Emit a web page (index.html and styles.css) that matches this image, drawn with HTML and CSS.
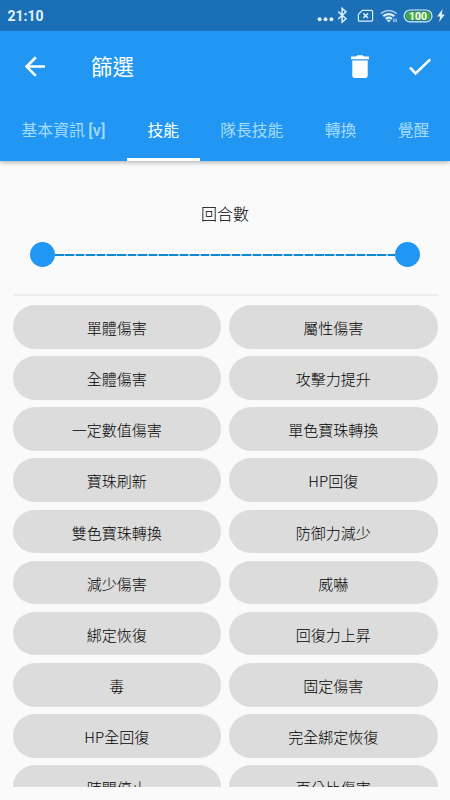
FILE: index.html
```html
<!DOCTYPE html>
<html lang="zh-Hant">
<head>
    <meta charset="UTF-8">
    <meta name="viewport" content="width=device-width, initial-scale=1">
    <title>篩選</title>
    <link rel="stylesheet" href="styles.css">
</head>
<body>
<div class="app">
    <header class="header">
        <div class="status">
            <span class="time">21:10</span>
            <svg class="status-icons" width="126" height="20" viewBox="0 0 126 20">
                <g fill="#d9efff">
                    <circle cx="10.6" cy="13.2" r="2"/>
                    <circle cx="16.5" cy="13.2" r="2"/>
                    <circle cx="22.4" cy="13.2" r="2"/>
                </g>
                <path d="M29.2 5.6l7.8 7.2-3.9 3.4V2.4L37 5.8 29.2 13" fill="none" stroke="#d9efff" stroke-width="1.5"/>
                <path d="M53.4 4.4h9.2q1 0 1 1v8.8q0 1-1 1H50.4q-1 0-1-1V8.2z" fill="none" stroke="#d9efff" stroke-width="1.2"/>
                <path d="M54.4 7.4l4.6 4.6m0-4.6L54.4 12" stroke="#d9efff" stroke-width="1.5"/>
                <g fill="none" stroke="#d9efff">
                    <path d="M71.8 7.6q8-6 16 0" stroke-width="1.5" opacity=".75"/>
                    <path d="M74.2 10.2q5.6-4.2 11.2 0" stroke-width="2.1"/>
                    <path d="M76.6 12.8q3.2-2.4 6.4 0" stroke-width="2.1"/>
                </g>
                <path d="M77.6 13.8h4.4l-2.2 2.6z" fill="#d9efff"/>
                <path d="M84.9 12.6v3.6m2.2-3.6v3.6" stroke="#d9efff" stroke-width="1"/>
                <rect x="95.2" y="4" width="27.8" height="11.8" rx="5.9" fill="#1c6fb5" stroke="#d9efff" stroke-width="1.2"/>
                <rect x="96.8" y="5.6" width="24.6" height="8.6" rx="4.3" fill="#43ad3b"/>
                <text class="battery-text" x="109" y="13.8" text-anchor="middle">100</text>
            </svg>
            <svg class="bolt" width="8" height="14" viewBox="0 0 8 14">
                <path d="M5.6 0L.2 7.6h2.9L2.2 13 7.8 5.4H4.7z" fill="#e2f3ff"/>
            </svg>
        </div>
        <div class="toolbar">
            <svg class="back" width="26" height="26" viewBox="0 0 24 24">
                <path d="M21.2 11.6H4.6M12.8 3L4.2 11.6l8.6 8.6" fill="none" stroke="#fff" stroke-width="2.4"/>
            </svg>
            <h1 class="title">篩選</h1>
            <svg class="trash" width="20" height="26" viewBox="0 0 20 26">
                <path d="M1 2.5h5l1.3-1.3h5.4L14 2.5h5v2.7H1zM2.3 6.5h15.4v15.3q0 2.2-2.2 2.2h-11q-2.2 0-2.2-2.2z" fill="#fff"/>
            </svg>
            <svg class="check" width="24" height="20" viewBox="0 0 24 20">
                <path d="M2 10.6l5.6 5.8L22.2 2.4" fill="none" stroke="#fff" stroke-width="2.5"/>
            </svg>
        </div>
        <nav class="tabs">
            <div class="tab tab-info">基本資訊 <span class="version">[v]</span></div>
            <div class="tab tab-skill active">技能</div>
            <div class="tab tab-leader">隊長技能</div>
            <div class="tab tab-change">轉換</div>
            <div class="tab tab-awake">覺醒</div>
        </nav>
    </header>

    <main class="content">
        <div class="turns">
            <div class="turns-label">回合數</div>
            <div class="slider">
                <div class="thumb"></div>
                <div class="track"></div>
                <div class="thumb"></div>
            </div>
        </div>
        <div class="chips">
            <div class="chip">單體傷害</div>
            <div class="chip">屬性傷害</div>
            <div class="chip">全體傷害</div>
            <div class="chip">攻擊力提升</div>
            <div class="chip">一定數值傷害</div>
            <div class="chip">單色寶珠轉換</div>
            <div class="chip">寶珠刷新</div>
            <div class="chip">HP回復</div>
            <div class="chip">雙色寶珠轉換</div>
            <div class="chip">防御力減少</div>
            <div class="chip">減少傷害</div>
            <div class="chip">威嚇</div>
            <div class="chip">綁定恢復</div>
            <div class="chip">回復力上昇</div>
            <div class="chip">毒</div>
            <div class="chip">固定傷害</div>
            <div class="chip">HP全回復</div>
            <div class="chip">完全綁定恢復</div>
            <div class="chip">時間停止</div>
            <div class="chip">百分比傷害</div>
        </div>
    </main>
</div>
</body>
</html>
```
FILE: styles.css
```css
*{
    margin: 0;
    padding: 0;
    box-sizing: border-box;
}
body{
    background: #fafafa;
    font-family: "Noto Sans CJK TC", sans-serif;
    color: #000;
}
.app{
    width: 450px;
    height: 800px;
    padding-bottom: 13px;
    display: flex;
    flex-direction: column;
    overflow: hidden;
}
svg{
    display: block;
    flex: none;
}

/* header */
.header{
    flex: none;
    height: 161px;
    background: #2196f3;
    box-shadow: 0 1px 5px rgba(0,0,0,.35);
    z-index: 1;
}
.status{
    height: 31px;
    padding: 0 5px 0 7.5px;
    background: #1b6fb6;
    display: flex;
    align-items: center;
}
.time{
    flex: 1;
    padding-top: 1px;
    font: bold 14px Roboto, sans-serif;
    color: #e2f3ff;
}
.status-icons{
    margin-top: 1px;
    margin-right: 2px;
}
.battery-text{
    font: bold 10.5px Roboto, sans-serif;
    fill: #fff;
}
.toolbar{
    height: 71px;
    padding: 0 18px 0 22px;
    display: flex;
    align-items: center;
}
.title{
    flex: 1;
    margin-left: 43px;
    padding-bottom: 2px;
    font-size: 21.5px;
    font-weight: 400;
    line-height: 32px;
    color: #fff;
}
.check{
    margin-left: 38px;
}
.tabs{
    height: 59px;
    display: flex;
    overflow: hidden;
}
.tab{
    flex: none;
    height: 59px;
    padding-top: 1px;
    font-size: 15.8px;
    line-height: 53px;
    text-align: center;
    white-space: nowrap;
    color: #a6dcfb;
}
.version{
    font-family: Roboto, sans-serif;
    font-size: 16.5px;
    font-weight: 500;
}
.tab-info{
    width: 127px;
}
.tab-skill{
    width: 72.5px;
}
.tab-leader{
    width: 104.5px;
}
.tab-change{
    width: 73px;
}
.tab-awake{
    width: 73px;
}
.active{
    color: #fff;
    border-bottom: 3px solid #fff;
}

/* content */
.content{
    flex: 1;
    min-height: 0;
    padding: 0 12.5px;
    overflow: hidden;
}
.turns{
    height: 135px;
    padding: 40px 17.5px 0;
    border-bottom: 2px solid #ededed;
}
.turns-label{
    font-size: 16px;
    font-weight: 300;
    line-height: 24px;
    text-align: center;
}
.slider{
    margin-top: 17px;
    display: flex;
    align-items: center;
}
.thumb{
    width: 25px;
    height: 25px;
    border-radius: 50%;
    background: #2196f3;
}
.track{
    flex: 1;
    height: 2px;
    background: repeating-linear-gradient(to right, #0f87d2 0, #0f87d2 8.6px, #a3cfec 8.6px, #a3cfec 10.4px);
}
.chips{
    margin-top: 9px;
    display: grid;
    grid-template-columns: 1fr 1fr;
    grid-auto-rows: 43.7px;
    gap: 7.45px 8px;
}
.chip{
    padding-top: 1px;
    border-radius: 22px;
    background: #dcdcdc;
    font-size: 15px;
    font-weight: 300;
    line-height: 43px;
    text-align: center;
}
```
